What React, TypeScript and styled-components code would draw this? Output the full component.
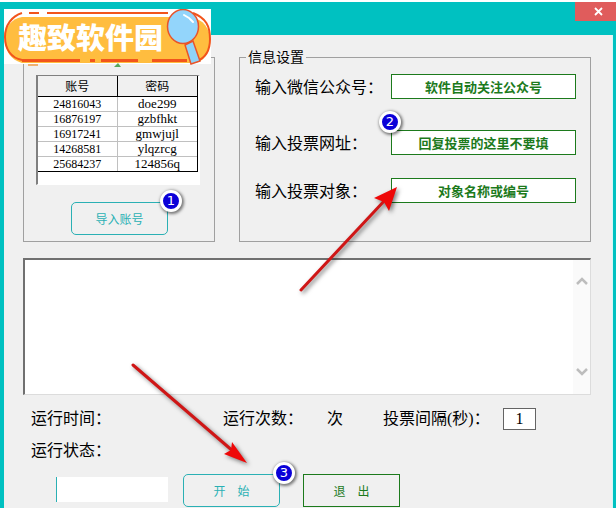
import React, { useState } from 'react';
import styled, { createGlobalStyle } from 'styled-components';

const TEAL = '#00c1c1';
const OUTLINE = '#2ab0b4';
const GREEN = '#1c7a1c';

const GlobalStyle = createGlobalStyle`
  *, *::before, *::after { box-sizing: border-box; }
  body { margin: 0; }
  body, button, input, textarea {
    font-family: 'Liberation Serif', 'Noto Sans CJK SC', sans-serif;
    color: #000;
  }
`;

const Shell = styled.div`
  position: relative;
  display: flex;
  flex-direction: column;
  min-height: 100vh;
  overflow: hidden;
  background: ${TEAL};
  border-top: 2px solid #fff;
`;

const TitleBar = styled.header`
  display: flex;
  justify-content: flex-end;
  height: 33px;
`;

const CloseButton = styled.button`
  display: flex;
  align-items: center;
  justify-content: center;
  width: 41px;
  height: 19px;
  padding: 0 0 0 6px;
  border: 0;
  background: #e05c5c;
`;

const Body = styled.main`
  flex: 1;
  margin: 0 3px 0 4px;
  padding: 14px 21px 0 19px;
  background: #f0f0f0;
  border-right: 1px solid #d4f8f8;
`;

const Panels = styled.div`
  display: flex;
  gap: 24px;
  height: 193px;
`;

const Panel = styled.fieldset`
  min-width: 0;
  margin: 0;
  border: 1px solid #a0a0a0;
`;

const AccountPanel = styled(Panel)`
  display: flex;
  flex-direction: column;
  align-items: center;
  flex: 0 0 192px;
  margin-top: 8px;
  padding: 17px 11px 0 12px;
`;

const SettingsPanel = styled(Panel)`
  flex: 1;
  padding: 8px 14px 0 15px;
`;

const Legend = styled.legend`
  height: 17px;
  margin-left: -9px;
  padding: 0 2px;
  font-size: 14px;
  line-height: 17px;
`;

const TableFrame = styled.div`
  align-self: stretch;
  height: 110px;
  margin-right: 3px;
  border: 2px solid;
  border-width: 1px 2px 1px 2px;
  border-color: #808080 #fff #fff #808080;
  background: #fff;
`;

const AccountTable = styled.table`
  width: 100%;
  table-layout: fixed;
  border-spacing: 0;
  border-right: 1px solid #000;
  border-bottom: 1px solid #000;
  font-size: 12px;
  line-height: 14px;
  text-align: center;
`;

const HeadCell = styled.th`
  height: 21px;
  padding: 2px 0 0;
  background: #f0f0f0;
  border-bottom: 1px solid #000;
  font-weight: 400;
  &:first-child { border-right: 1px solid #000; }
`;

const Cell = styled.td`
  height: 15px;
  padding: 0;
  border-bottom: 1px solid #c0c0c0;
  &:first-child { border-right: 1px solid #c0c0c0; }
  &:last-child { font-size: 13px; }
  tr:last-child > & { height: 14px; border-bottom: 0; }
`;

const ButtonSlot = styled.div<{ $top?: number }>`
  position: relative;
  margin-top: ${({ $top = 0 }) => $top}px;
`;

const PushButton = styled.button<{ $tone: string; $radius: number }>`
  display: block;
  width: 97px;
  height: 33px;
  padding: 0;
  border: 1px solid ${({ $tone }) => $tone};
  border-radius: ${({ $radius }) => $radius}px;
  background: transparent;
  color: ${({ $tone }) => $tone};
  font-size: 12px;
  white-space: pre;
`;

const FieldGrid = styled.div`
  display: grid;
  grid-template-columns: 136px 1fr;
  grid-template-rows: 56px 48px 25px;
  align-items: start;
`;

const Label = styled.label`
  font-size: 16px;
  line-height: 28px;
  white-space: nowrap;
`;

const FieldSlot = styled.div`
  position: relative;
`;

const HintInput = styled.input`
  display: block;
  width: 100%;
  height: 25px;
  padding: 0;
  border: 1px solid ${GREEN};
  background: #fff;
  color: ${GREEN};
  font-size: 13px;
  font-weight: 700;
  text-align: center;
`;

const LogBox = styled.div`
  display: flex;
  height: 137px;
  margin-top: 16px;
  border: 2px solid;
  border-width: 2px 1px 1px 2px;
  border-color: #707070 #dcdcdc #dcdcdc #707070;
  background: #fff;
`;

const LogText = styled.textarea`
  flex: 1;
  min-width: 0;
  border: 0;
  resize: none;
  outline: 0;
  overflow: hidden;
`;

const ScrollTrack = styled.div`
  display: flex;
  flex-direction: column;
  justify-content: space-between;
  width: 17px;
  padding: 16px 0 17px;
  background: #fafafa;
`;

const ScrollButton = styled.button`
  display: flex;
  justify-content: center;
  padding: 0;
  border: 0;
  background: none;
`;

const StatusRow = styled.div<{ $top: number }>`
  display: grid;
  grid-template-columns: 192px 104px 56px 120px 33px;
  align-items: center;
  height: 22px;
  margin-top: ${({ $top }) => $top}px;
  padding-left: 8px;
  font-size: 16px;
  line-height: 24px;
  white-space: nowrap;
`;

const IntervalInput = styled.input`
  width: 33px;
  height: 22px;
  padding: 0;
  border: 1px solid #646464;
  background: #fff;
  font-size: 16px;
  text-align: center;
`;

const ActionRow = styled.div`
  display: flex;
  margin-top: 13px;
  padding-left: 33px;
`;

const CodeInput = styled.input`
  width: 112px;
  height: 25px;
  margin: 3px 15px 0 0;
  border: 0;
  border-left: 1px solid ${OUTLINE};
  background: #fff;
`;

const ExitSlot = styled.div`
  margin-left: 23px;
`;

const BadgeMark = styled.span<{ $left: number; $top: number }>`
  position: absolute;
  left: ${({ $left }) => $left}px;
  top: ${({ $top }) => $top}px;
  z-index: 2;
  width: 22px;
  height: 22px;
  border: 3px solid #fff;
  border-radius: 50%;
  background: #0a00d8;
  box-shadow: 1px 1px 3px 1px rgba(0, 0, 0, 0.5);
  color: #fff;
  font: 13px/16px 'DejaVu Sans', sans-serif;
  text-align: center;
`;

const ArrowLayer = styled.svg`
  position: absolute;
  left: 0;
  top: -2px;
  pointer-events: none;
  filter: drop-shadow(2px 2px 2px rgba(0, 0, 0, 0.5));
`;

const LogoMark = styled.svg`
  position: absolute;
  left: 4px;
  top: 7px;
`;

const accounts = [
  ['24816043', 'doe299'],
  ['16876197', 'gzbfhkt'],
  ['16917241', 'gmwjujl'],
  ['14268581', 'ylqzrcg'],
  ['25684237', '124856q'],
];

const Logo = () => (
  <LogoMark width="207" height="59" viewBox="0 0 207 59" role="img" aria-label="趣致软件园">
    <rect width="207" height="55" fill="#fff" />
    <path d="M24 55h10v2H24z" fill="#f0b070" />
    <path d="M110 58l4-4 3 4z" fill="#58a85c" />
    <path d="M18 8H186C200 10 206 20 206 31C206 44 199 54 189 54H18C7 51 1 42 1 30C1 18 7 10 18 8Z" fill="#ffbd3f" />
    <g fill="none" stroke="#f2541b" strokeWidth="2">
      <path d="M18 4C8 7 1 16 1 28C1 40 7 49 18 51" />
      <path d="M25 4H35M43 4H164" />
      <path d="M189 4C202 9 206 17 206 30C206 42 201 49 193 52" />
    </g>
    <path d="M18 51.500H76M86 51.500H91M97 51.500H134M148 51.500H183" fill="none" stroke="#f2541b" strokeWidth="3" />
    <text x="14" y="40" fill="#fff" fontSize="29" fontWeight="900" fontFamily="'Noto Sans CJK SC', sans-serif">趣致软件园</text>
    <path d="M181 36l8-4 7 20-9 3z" fill="#8fd3f8" stroke="#e8542a" strokeWidth="1.500" />
    <ellipse cx="179" cy="17.500" rx="15.500" ry="17" fill="#93d5fb" stroke="#e8542a" strokeWidth="1.500" />
    <path d="M180 6l5 3M186 10l3 3" stroke="#fff" strokeWidth="2" strokeLinecap="round" />
  </LogoMark>
);

const Arrows = () => (
  <ArrowLayer width="616" height="508" viewBox="0 0 616 508" aria-hidden="true">
    <path d="M301 290L386 199M133 365L234 452" stroke="#cf1616" strokeWidth="3" strokeLinecap="round" />
    <path d="M397 187L389 211L384 202L374 198Z" fill="#ee0808" />
    <path d="M247 463L224 454L231 450L232 442Z" fill="#ee0808" />
  </ArrowLayer>
);

const Chevron = ({ up }: { up?: boolean }) => (
  <svg width="12" height="10" viewBox="0 0 12 10" aria-hidden="true">
    <path d={up ? 'M1 8L6 3L11 8' : 'M1 2L6 7L11 2'} fill="none" stroke="#bdbdbd" strokeWidth="2.500" />
  </svg>
);

export default function App() {
  const [official, setOfficial] = useState('软件自动关注公众号');
  const [url, setUrl] = useState('回复投票的这里不要填');
  const [target, setTarget] = useState('对象名称或编号');
  const [interval, setIntervalValue] = useState('1');

  return (
    <Shell>
      <GlobalStyle />
      <TitleBar>
        <CloseButton type="button" aria-label="关闭">
          <svg width="9" height="9" viewBox="0 0 9 9" aria-hidden="true">
            <path d="M1 1l7 7M8 1L1 8" stroke="#fff" strokeWidth="1.800" />
          </svg>
        </CloseButton>
      </TitleBar>
      <Body>
        <Panels>
          <AccountPanel aria-label="账号">
            <TableFrame>
              <AccountTable>
                <thead>
                  <tr>
                    <HeadCell>账号</HeadCell>
                    <HeadCell>密码</HeadCell>
                  </tr>
                </thead>
                <tbody>
                  {accounts.map(([name, password]) => (
                    <tr key={name}>
                      <Cell>{name}</Cell>
                      <Cell>{password}</Cell>
                    </tr>
                  ))}
                </tbody>
              </AccountTable>
            </TableFrame>
            <ButtonSlot $top={17}>
              <PushButton type="button" $tone={OUTLINE} $radius={5}>导入账号</PushButton>
              <BadgeMark $left={89} $top={-12}>1</BadgeMark>
            </ButtonSlot>
          </AccountPanel>
          <SettingsPanel>
            <Legend>信息设置</Legend>
            <FieldGrid>
              <Label htmlFor="official">输入微信公众号：</Label>
              <HintInput id="official" value={official} onChange={(e) => setOfficial(e.target.value)} />
              <Label htmlFor="url">输入投票网址：</Label>
              <FieldSlot>
                <HintInput id="url" value={url} onChange={(e) => setUrl(e.target.value)} />
                <BadgeMark $left={-12} $top={-19}>2</BadgeMark>
              </FieldSlot>
              <Label htmlFor="target">输入投票对象：</Label>
              <HintInput id="target" value={target} onChange={(e) => setTarget(e.target.value)} />
            </FieldGrid>
          </SettingsPanel>
        </Panels>
        <LogBox>
          <LogText aria-label="运行日志" />
          <ScrollTrack>
            <ScrollButton type="button" aria-label="向上滚动"><Chevron up /></ScrollButton>
            <ScrollButton type="button" aria-label="向下滚动"><Chevron /></ScrollButton>
          </ScrollTrack>
        </LogBox>
        <StatusRow $top={12}>
          <span>运行时间：</span>
          <span>运行次数：</span>
          <span>次</span>
          <label htmlFor="interval">投票间隔(秒)：</label>
          <IntervalInput id="interval" value={interval} onChange={(e) => setIntervalValue(e.target.value)} />
        </StatusRow>
        <StatusRow $top={10}>
          <span>运行状态：</span>
        </StatusRow>
        <ActionRow>
          <CodeInput aria-label="注册码" />
          <ButtonSlot>
            <PushButton type="button" $tone={OUTLINE} $radius={5}>{'开\u3000始'}</PushButton>
            <BadgeMark $left={90} $top={-12}>3</BadgeMark>
          </ButtonSlot>
          <ExitSlot>
            <PushButton type="button" $tone={GREEN} $radius={0}>{'退\u3000出'}</PushButton>
          </ExitSlot>
        </ActionRow>
      </Body>
      <Logo />
      <Arrows />
    </Shell>
  );
}
